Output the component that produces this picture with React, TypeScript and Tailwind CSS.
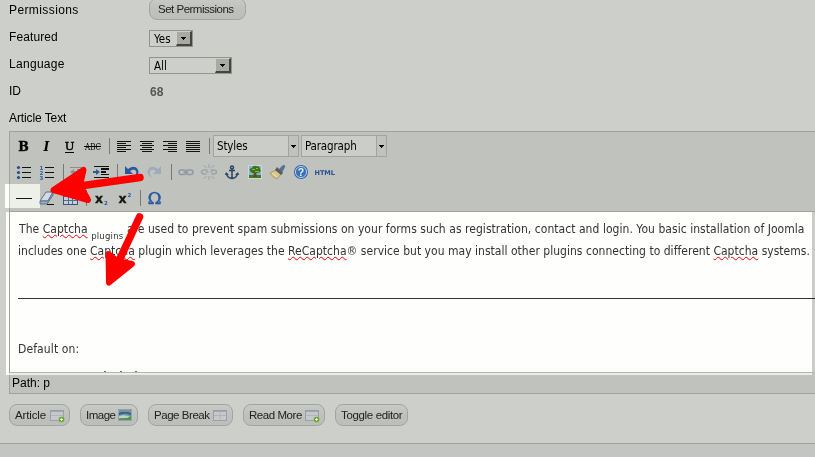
import type { ReactNode } from "react";

const TAHOMA = "font-['DejaVu_Sans_Condensed','DejaVu_Sans',sans-serif] [font-stretch:condensed]";

function Row({ label, spacing, children }: { label: string; spacing: string; children?: ReactNode }) {
  return (
    <div className="flex h-[27px] items-center pl-[9px]">
      <div className={`w-[140px] shrink-0 whitespace-nowrap ${spacing}`}>{label}</div>
      {children}
    </div>
  );
}

function Select({ value, width }: { value: string; width: string }) {
  return (
    <div className={`flex h-[17px] items-stretch border border-[#92948f] ${width}`}>
      <span className={`flex-1 pl-[4px] text-[11.5px] leading-[16px] text-black ${TAHOMA}`}>{value}</span>
      <span className="flex w-[16px] items-center justify-center border-t border-r-2 border-b-2 border-l border-t-[#cdcfca] border-r-[#44453f] border-b-[#44453f] border-l-[#cdcfca] bg-[#a9aaa3] pt-[2px]">
        <svg width="7" height="4" viewBox="0 0 7 4" shapeRendering="crispEdges"><path d="M1 0h5v1H1zM2 1h3v1H2zM3 2h1v1H3z" fill="#000" /></svg>
      </span>
    </div>
  );
}

function Icon({ children }: { children: ReactNode }) {
  return <svg className="shrink-0" width="23" height="26" viewBox="0 0 23 26">{children}</svg>;
}

function Sep() {
  return <div className="flex w-[8px] shrink-0 justify-end pr-[2px]"><div className="my-[5px] w-px bg-[#777a78]" /></div>;
}

function Lines({ rows }: { rows: [number, number][] }) {
  return (
    <Icon>
      <g fill="#111" shapeRendering="crispEdges">
        {rows.map(([x, w], i) => <rect key={i} x={x} y={8 + i * 2} width={w} height="1" />)}
      </g>
    </Icon>
  );
}

function ListBox({ value }: { value: string }) {
  return (
    <div className="mt-[2px] mr-[2px] flex h-[22px] w-[86px] shrink-0 border border-[#a2a4a1] bg-[#cbcdc8]">
      <span className={`flex-1 pl-[3px] text-[11.5px] leading-[20px] tracking-[-0.15px] text-black ${TAHOMA}`}>{value}</span>
      <span className="flex w-[10px] items-center justify-center border-l border-[#a2a4a1] bg-[#c0c2bd]">
        <svg width="5" height="3" viewBox="0 0 5 3" shapeRendering="crispEdges"><path d="M0 0h5v1H0zM1 1h3v1H1zM2 2h1v1H2z" fill="#000" /></svg>
      </span>
    </div>
  );
}

function Button({ children, width }: { children: ReactNode; width: string }) {
  return (
    <div className={`flex h-[22px] shrink-0 items-center justify-between rounded-[8px] border border-[#a2a5a1] bg-linear-to-b from-[#c8cac6] via-[#bfc1be] via-50% to-[#bcbebb] pr-[4px] text-[11.5px] leading-[19px] whitespace-nowrap text-[#222] ${width}`}>
      {children}
    </div>
  );
}

function Pane({ kind }: { kind: "add" | "image" | "break" }) {
  return (
    <svg className="shrink-0" width="16" height="16" viewBox="0 0 16 16">
      {kind === "image" ? (
        <>
          <rect x="1.5" y="2.5" width="13" height="11" fill="#6e94a6" stroke="#9ba2a4" />
          <path d="M2 6q4-2 12 0v2Q8 5 2 8z" fill="#315f80" />
          <path d="M2 9q6-2 12 1v1H2z" fill="#c4cfcc" />
          <path d="M2 13v-1l8-1 4-2v4z" fill="#4c9a3d" />
        </>
      ) : (
        <>
          <rect x="1.5" y="3.5" width="13" height="10" fill="#c6c8c9" stroke="#9ca0ab" />
          <path d="M1 4h14" stroke="#989ca4" strokeWidth="1.5" />
          <path d={kind === "add" ? "M2 8.5h12" : "M8 4v9M2 8.500h12"} stroke="#b1b4bc" />
          {kind === "add" && <><circle cx="12.500" cy="12.500" r="2.800" fill="#69a72e" /><path d="M12.500 11v3M11 12.500h3" stroke="#e0edcf" /></>}
        </>
      )}
    </svg>
  );
}

function Misspelled({ children }: { children: string }) {
  return <span className="underline decoration-[#e00] decoration-wavy decoration-1 underline-offset-1">{children}</span>;
}

export default function App() {
  return (
    <div className="relative flex h-[457px] w-[815px] flex-col overflow-hidden bg-[#cdcfca] font-['Liberation_Sans',Arial,sans-serif] text-[12px] text-black">
      <div className="-mt-[4px]">
        <Row label="Permissions" spacing="tracking-[0.4px]"><Button width="w-[97px] pl-[8px] mt-[-1px] tracking-[-0.5px]"><span>Set Permissions</span></Button></Row>
        <Row label="Featured" spacing="tracking-[0.1px]"><div className="mt-[4px]"><Select value="Yes" width="w-[44px]" /></div></Row>
        <Row label="Language" spacing="tracking-[0.3px]"><div className="mt-[4px]"><Select value="All" width="w-[83px]" /></div></Row>
        <Row label="ID" spacing=""><span className="pt-[2px] pl-px font-bold text-[#555]">68</span></Row>
        <Row label="Article Text" spacing="tracking-[-0.1px]" />
      </div>

      <div className="ml-[9px] flex flex-col border-t border-b border-l border-[#a0a29e]">
        <div className="flex h-[80px] flex-col border-b border-[#a0a29e] bg-[#c0c2bd] pt-px pl-[2px]">
          <div className="flex h-[26px]">
            <Icon><text x="11.5" y="18" textAnchor="middle" fontFamily="DejaVu Serif" fontWeight="bold" fontSize="12.5" stroke="#000" strokeWidth=".3">B</text></Icon>
            <Icon><text x="11.5" y="18" textAnchor="middle" fontFamily="DejaVu Serif" fontWeight="bold" fontStyle="italic" fontSize="12.5">I</text></Icon>
            <Icon><text x="11.5" y="17" textAnchor="middle" fontFamily="DejaVu Serif" fontSize="11.5" stroke="#000" strokeWidth=".5">U</text><path d="M7 19.5h9" stroke="#000" /></Icon>
            <Icon><text x="4" y="17" fontFamily="DejaVu Serif" fontSize="8.5" textLength="16" lengthAdjust="spacingAndGlyphs">ABC</text><path d="M3 13.5h17" stroke="#000" /></Icon>
            <Sep />
            <Lines rows={[[5, 14], [5, 9], [5, 14], [5, 9], [5, 14], [5, 9]]} />
            <Lines rows={[[5, 14], [7, 10], [5, 14], [7, 10], [5, 14], [7, 10]]} />
            <Lines rows={[[5, 14], [10, 9], [5, 14], [10, 9], [5, 14], [10, 9]]} />
            <Lines rows={[[5, 14], [5, 14], [5, 14], [5, 14], [5, 14], [5, 14]]} />
            <Sep />
            <div className="w-px" />
            <ListBox value="Styles" />
            <ListBox value="Paragraph" />
          </div>
          <div className="flex h-[26px]">
            <Icon>
              <g fill="#2b4d8c"><circle cx="6.5" cy="8.5" r="1.6" /><circle cx="6.5" cy="13.5" r="1.6" /><circle cx="6.5" cy="18.5" r="1.6" /></g>
              <path d="M10 8h9v1h-9zM10 13h9v1h-9zM10 18h9v1h-9z" fill="#111" />
            </Icon>
            <Icon>
              <g fontFamily="DejaVu Sans" fontSize="5.5" fontWeight="bold" fill="#2b5da8"><text x="4.5" y="10.500">1</text><text x="4.5" y="15.500">2</text><text x="4.500" y="20.500">3</text></g>
              <path d="M10 8h9v1h-9zM10 13h9v1h-9zM10 18h9v1h-9z" fill="#111" />
            </Icon>
            <Sep />
            <Icon><path d="M4 8h15v1H4zM11 10h8v1h-8zM11 12h5v1h-5zM11 14h8v1h-8zM4 18h15v1H4zM4 13l4-3v2h3v2H8v2z" fill="#8b8f93" /></Icon>
            <Icon><g transform="translate(1 0)"><path d="M4 7h15v1H4zM11 9h8v2h-8zM11 12h5v2h-5zM11 15h8v1h-8zM4 18h15v1H4z" fill="#111" /><path d="M10 13L6 10v2H3v2h3v2z" fill="#2d5b9b" /></g></Icon>
            <Sep />
            <Icon><path d="M5 7v8h8l-3-3q4-3 6 0 1 3-2 7 6-4 4-8-3-6-10-1z" fill="#2859a2" /></Icon>
            <Icon><path d="M18 7v8h-8l3-3q-4-3-6 0-1 3 2 7-6-4-4-8 3-6 10-1z" fill="#a0abb9" /></Icon>
            <Sep />
            <Icon><g fill="none" stroke="#9199a5" strokeWidth="1.500"><rect x="5" y="11" width="7" height="4.500" rx="2.250" /><rect x="12" y="11" width="7" height="4.500" rx="2.250" /><path d="M9.500 13.250h5" /></g></Icon>
            <Icon><g fill="none" stroke="#9ca3ac" strokeWidth="1.500" transform="translate(.5 0)"><path d="M10 11H7q-3 0-3 2t3 2h2M13 11h3q3 0 3 2t-3 2h-2M8.500 13H11M13 13h2" /><path strokeWidth="1" d="M11.500 5v4M6 6l3 3M17 6l-3 3M11.500 17v4M6 20l3-3M17 20l-3-3" /></g></Icon>
            <Icon><g transform="translate(.5 0)"><g fill="none" stroke="#294466" strokeWidth="1.500"><circle cx="11.500" cy="8.500" r="1.500" /><path d="M11.500 10v9M8.500 11.500h6M6 14q0 4.500 5.500 5.500Q17 18.500 17 14" /></g><path d="M4.500 16l1-3 3 3zM18.500 16l-1-3-3 3z" fill="#294466" /></g></Icon>
            <Icon><g transform="translate(1 0)"><rect x="4" y="6" width="14" height="14" fill="#d0d6d2" /><rect x="5" y="7" width="12" height="9" fill="#82b4d0" /><path d="M5 16h12v3H5z" fill="#417925" /><path d="M10 13h2l1 5H9z" fill="#684821" /><path d="M6 12q-1-3 2-3 1-3 4-2 4 0 4 3 2 3-2 4H8z" fill="#3c741b" /><path d="M8 10h3v1H8zM12 9h2v1h-2zM11 12h4v1h-4z" fill="#8bb644" /></g></Icon>
            <Icon><path d="M13 10l4-4q3 0 2 2l-3 6z" fill="#52729d" /><path d="M4 14l6-3 5 4-4 5q-5-2-7-6z" fill="#d9c887" stroke="#9e8750" strokeWidth=".7" /><path d="M11 8l6 6-2 2-6-5z" fill="#595c5c" /><path d="M6 14l5 4" stroke="#eee3b9" /></Icon>
            <Icon><circle cx="12" cy="13" r="7" fill="#2c62ae" /><circle cx="12" cy="13" r="5.600" fill="#3971bb" stroke="#c9d6e1" strokeWidth=".9" /><text x="12" y="17" textAnchor="middle" fontFamily="Liberation Sans" fontSize="10.500" fontWeight="bold" fill="#edf2f3">?</text></Icon>
            <Icon><text x="2.500" y="15.500" fontFamily="DejaVu Sans" fontSize="6.500" fontWeight="bold" fill="#285092">HTML</text></Icon>
          </div>
          <div className="flex h-[26px]">
            <Icon><path d="M4 13h16v1H4z" fill="#111" /></Icon>
            <Icon><path d="M5 16l6-9h7l-5 9z" fill="#d2dbe1" stroke="#5a708c" /><path d="M5 16v3h7l6-9V7l-5 9z" fill="#9dadbe" stroke="#5a708c" /><path d="M12 19.500h7" stroke="#111" /></Icon>
            <Icon><rect x="5.500" y="7.500" width="14" height="12" fill="#c7d0d9" stroke="#36557d" /><path d="M6 8h13v3H6z" fill="#6b87ad" /><path d="M6 11.500h13M6 15.500h13M10.500 11v8M14.500 11v8" stroke="#506c90" /></Icon>
            <Sep />
            <Icon><text x="6" y="18" fontFamily="DejaVu Sans" fontSize="12.500" fontWeight="bold" fill="#151515" stroke="#151515" strokeWidth=".3">x</text><text x="15" y="20" fontFamily="DejaVu Sans" fontSize="5.500" fontWeight="bold" fill="#2857a5">2</text></Icon>
            <Icon><text x="6.500" y="18" fontFamily="DejaVu Sans" fontSize="12.500" fontWeight="bold" fill="#151515" stroke="#151515" strokeWidth=".3">x</text><text x="15.500" y="12" fontFamily="DejaVu Sans" fontSize="5.500" fontWeight="bold" fill="#2857a5">2</text></Icon>
            <Sep />
            <Icon><text x="11.500" y="18.500" textAnchor="middle" fontFamily="DejaVu Serif" fontSize="16.500" fill="#2857a5" stroke="#2857a5" strokeWidth=".5">Ω</text></Icon>
          </div>
        </div>

        <div className={`relative h-[160px] overflow-hidden bg-[#fefefd] pt-[6px] pl-[8px] text-[12px] leading-[22px] whitespace-nowrap text-[#333] ${TAHOMA}`}>
          <div className="h-[22px] pl-px tracking-[0.045px]">The <Misspelled>Captcha</Misspelled> <span className="relative top-[6px] text-[9.500px] tracking-[0.2px]">plugins</span> are used to prevent spam submissions on your forms such as registration, contact and login. You basic installation of Joomla</div>
          <div className="h-[22px] tracking-[0.025px]">includes one <Misspelled>Captcha</Misspelled> plugin which leverages the <Misspelled>ReCaptcha</Misspelled>® service but you may install other plugins connecting to different <Misspelled>Captcha</Misspelled> systems.</div>
          <div className="mt-[36px] h-px bg-[#333]" />
          <div className="mt-[39px] tracking-[0.12px]">Default on:</div>
          <div className="mt-[11px] flex gap-[14px] pl-[86px]"><i className="h-px w-[2px] bg-[#777]" /><i className="h-px w-[2px] bg-[#777]" /><i className="-ml-px h-px w-[2px] bg-[#777]" /></div>
        </div>
        <div className="h-[21px] border-t border-[#b4b6b2] bg-[#c0c2bd] pl-[2px] leading-[21px]">Path: p</div>
      </div>

      <div className="mt-[10px] ml-[9px] flex gap-[10px]">
        <Button width="w-[61px] pl-[5px] tracking-[-0.15px]"><span>Article</span><Pane kind="add" /></Button>
        <Button width="w-[58px] pl-[5px] tracking-[-0.5px]"><span>Image</span><Pane kind="image" /></Button>
        <Button width="w-[85px] pl-[5px] tracking-[-0.45px]"><span>Page Break</span><Pane kind="break" /></Button>
        <Button width="w-[82px] pl-[5px] tracking-[-0.45px]"><span>Read More</span><Pane kind="add" /></Button>
        <Button width="w-[73px] pl-[5px] tracking-[-0.35px]"><span>Toggle editor</span></Button>
      </div>
      <div className="mt-[17px] flex-1 border-t border-[#a0a29e] bg-[#c3c5c2]" />

      <div className="absolute top-[184px] left-[5px] h-[24px] w-[35px] bg-[#303030] mix-blend-color-dodge" />
      <div className="absolute top-[212px] left-[6px] h-[163px] w-[3px] bg-[#fefefd]" />
      <div className="absolute top-[212px] right-0 h-[160px] w-[3px] bg-black/20" />
      <div className="absolute top-[373px] left-[9px] h-[2px] w-[803px] bg-[#ecedeb]" />
      <svg className="absolute top-0 left-0" width="815" height="457" viewBox="0 0 815 457">
        <g fill="#f00" stroke="#f00" strokeLinecap="round" strokeLinejoin="round" strokeWidth="6">
          <path d="M140 177.500L80 186" strokeWidth="7.500" />
          <path d="M53.500 190L83.500 170 80 185 88 200z" />
          <path d="M139.500 217L118 263" strokeWidth="7.500" />
          <path d="M109 282.500L108.500 254 117 261 132 264z" />
        </g>
      </svg>
    </div>
  );
}
